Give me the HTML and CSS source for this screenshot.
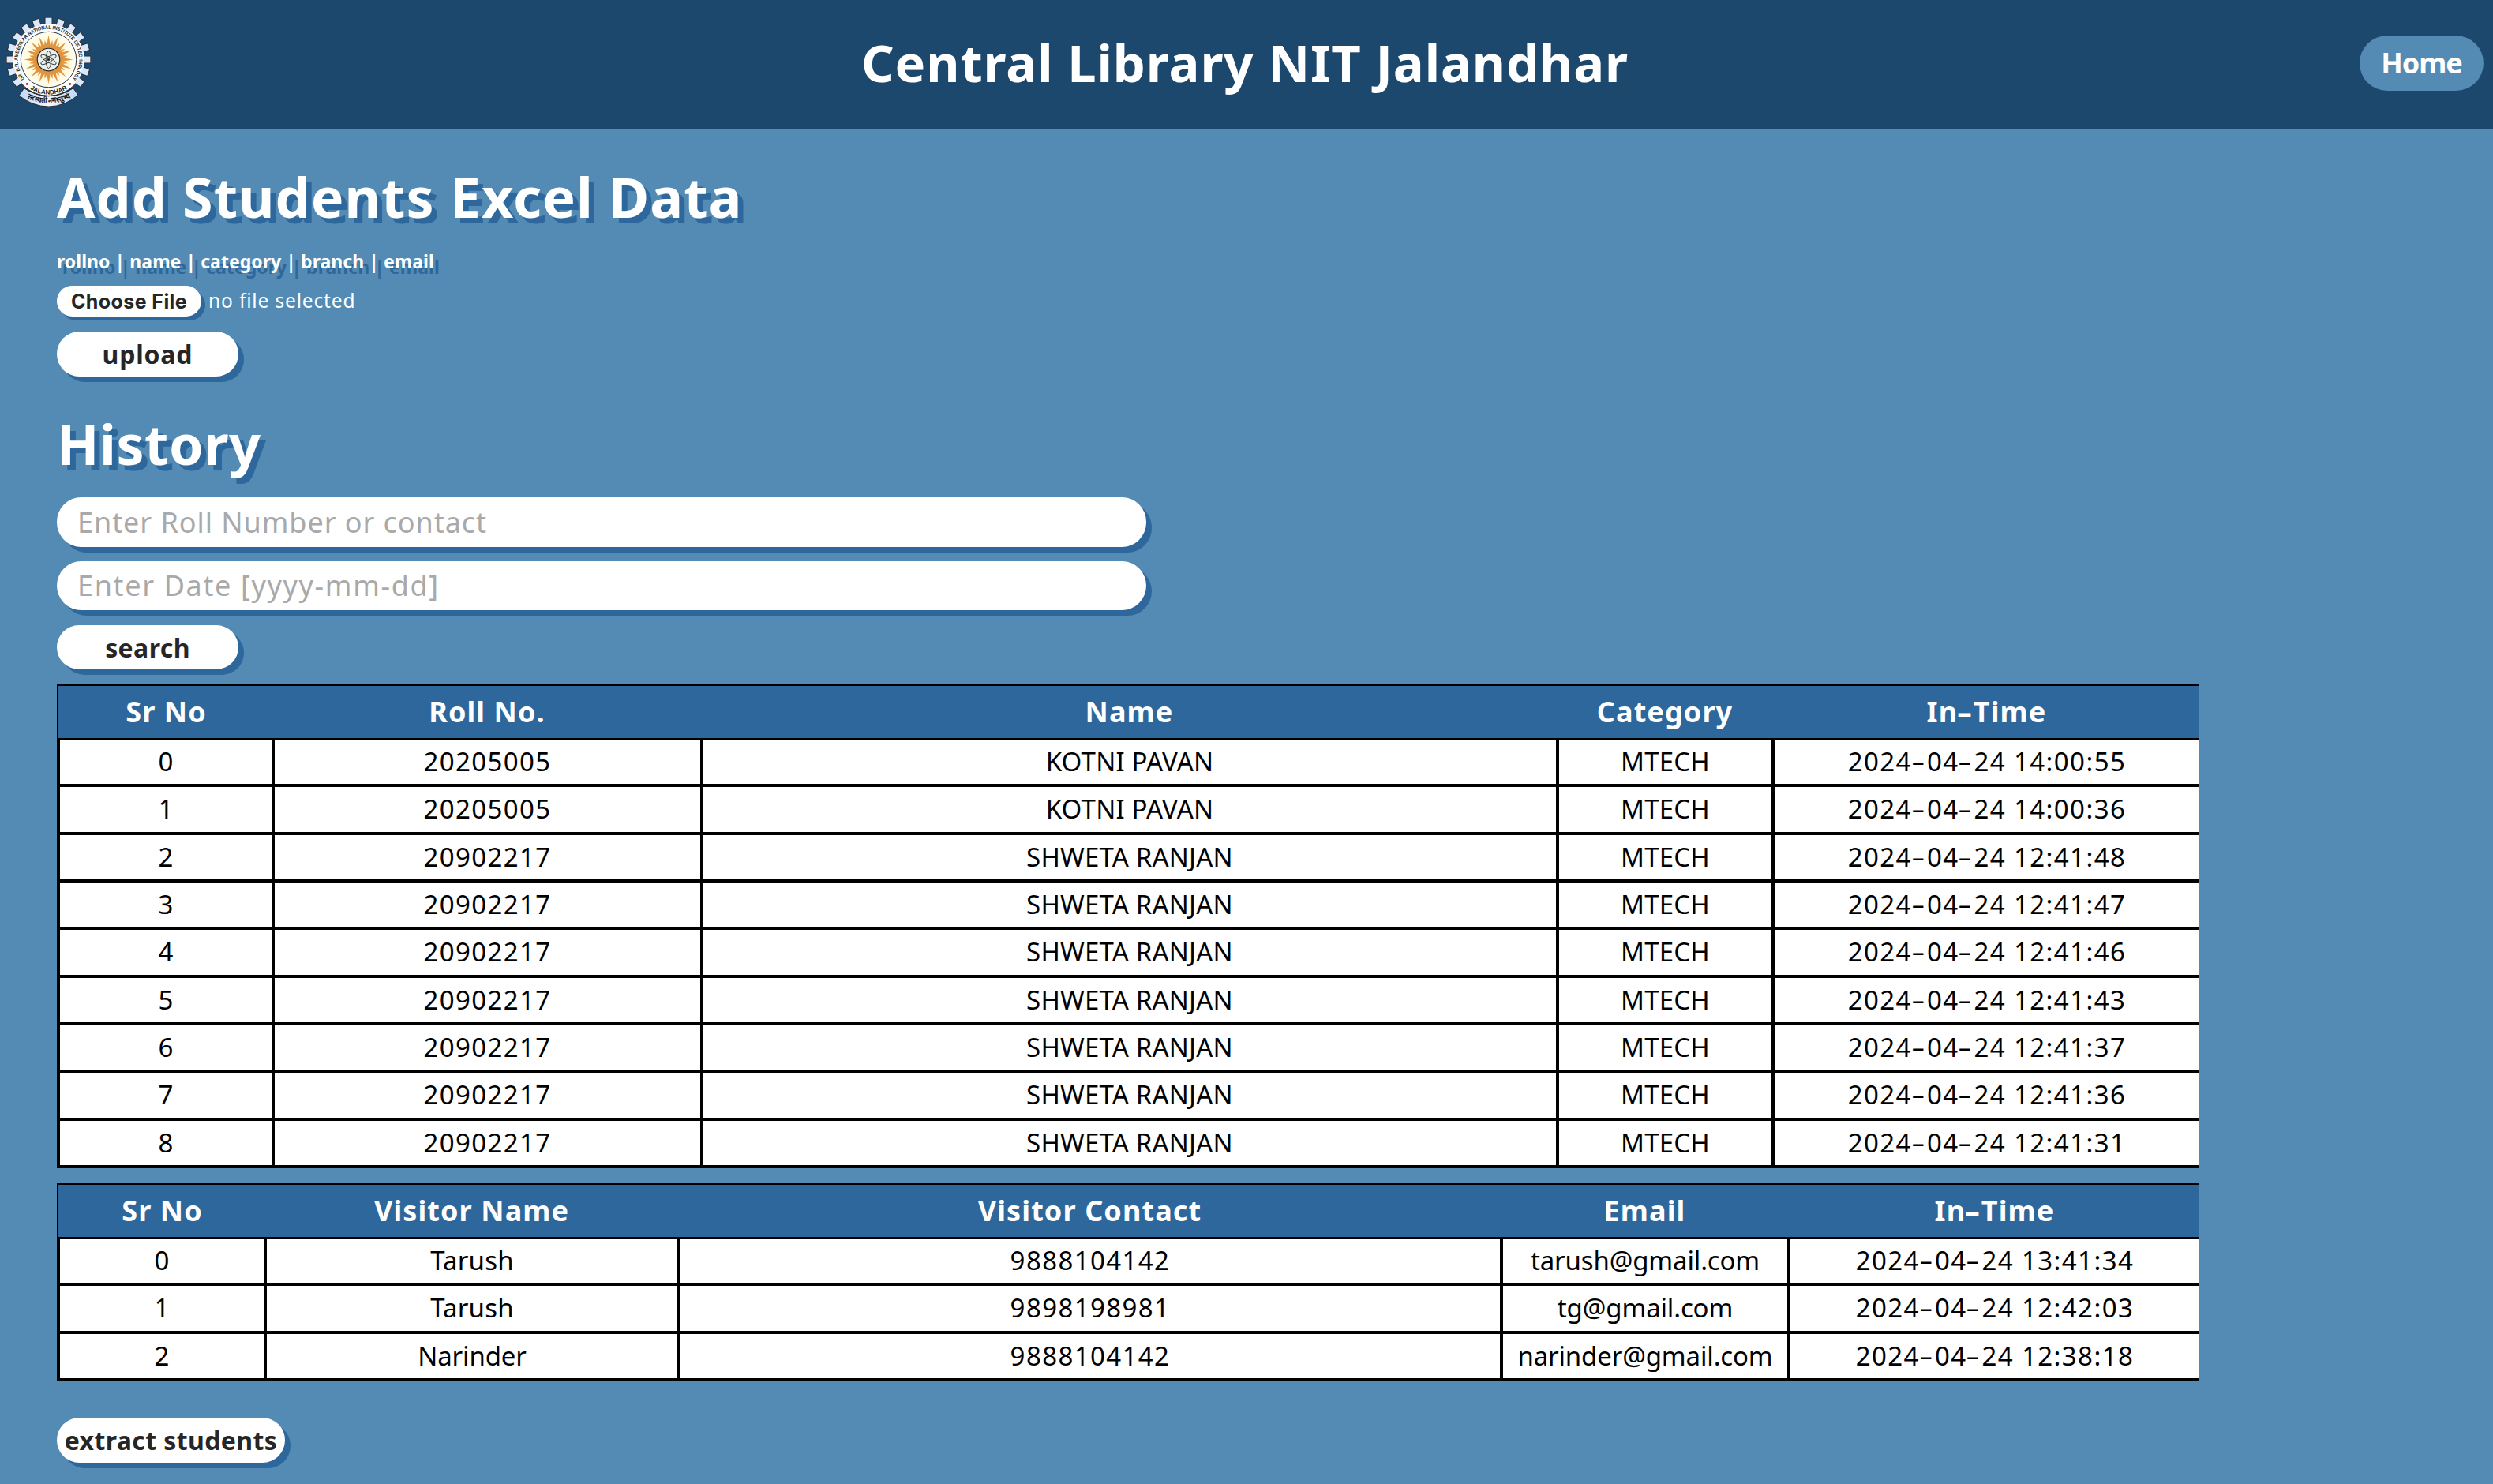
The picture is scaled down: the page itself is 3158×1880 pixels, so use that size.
FILE: index.html
```html
<!DOCTYPE html>
<html lang="en">
<head>
<meta charset="utf-8">
<title>Central Library NIT Jalandhar</title>
<link rel="stylesheet" href="styles.css">
</head>
<body>
<header class="topbar">
  <svg class="logo" viewBox="24 62 322 344" role="img" aria-label="NIT Jalandhar">
    <defs>
      <radialGradient id="disc"><stop offset="0.3" stop-color="#fff6c4"/><stop offset="1" stop-color="#fffdf0"/></radialGradient>
      <linearGradient id="band"><stop offset="0" stop-color="#bcd6f7"/><stop offset="0.5" stop-color="#f2f7ff"/><stop offset="1" stop-color="#bcd6f7"/></linearGradient>
      <path id="arcTop" d="M94 298 A116.500 116.500 0 1 1 276 298"/>
      <path id="arcLow" d="M67 286 A133 133 0 0 0 303 286"/>
      <path id="arcBand" d="M60 337 A172 172 0 0 0 310 337"/>
      <rect id="tooth" x="173" y="66" width="24" height="30"/>
      <g id="teeth">
        <use href="#tooth" transform="rotate(-126 185 225)"/><use href="#tooth" transform="rotate(-108 185 225)"/>
        <use href="#tooth" transform="rotate(-90 185 225)"/><use href="#tooth" transform="rotate(-72 185 225)"/>
        <use href="#tooth" transform="rotate(-54 185 225)"/><use href="#tooth" transform="rotate(-36 185 225)"/>
        <use href="#tooth" transform="rotate(-18 185 225)"/><use href="#tooth"/>
        <use href="#tooth" transform="rotate(18 185 225)"/><use href="#tooth" transform="rotate(36 185 225)"/>
        <use href="#tooth" transform="rotate(54 185 225)"/><use href="#tooth" transform="rotate(72 185 225)"/>
        <use href="#tooth" transform="rotate(90 185 225)"/><use href="#tooth" transform="rotate(108 185 225)"/>
        <use href="#tooth" transform="rotate(126 185 225)"/>
      </g>
      <g id="rays">
        <path d="M176 182 L185 132 L194 182Z"/>
        <path d="M176 182 L185 150 L194 182Z" transform="rotate(11.250 185 225)"/>
      </g>
      <g id="quarter">
        <use href="#rays"/><use href="#rays" transform="rotate(22.500 185 225)"/>
        <use href="#rays" transform="rotate(45 185 225)"/><use href="#rays" transform="rotate(67.500 185 225)"/>
      </g>
    </defs>
    <use href="#teeth" fill="#dbe7fb" stroke="#2b2b2b" stroke-width="5"/>
    <circle cx="185" cy="225" r="138" fill="#fff" stroke="#2b2b2b" stroke-width="3"/>
    <use href="#teeth" fill="#dbe7fb"/>
    <circle cx="185" cy="225" r="134" fill="#fafcff"/>
    <path d="M92 334 Q185 394 279 334 L298 360 Q246 404 185 404 Q124 404 72 362Z" fill="url(#band)" stroke="#2b2b2b" stroke-width="3"/>
    <path d="M96 326 Q185 390 274 326 L274 300 L96 300Z" fill="#fafcff"/>
    <path d="M92 334 Q185 394 279 334" fill="none" stroke="#2b2b2b" stroke-width="3"/>
    <circle cx="185" cy="225" r="106" fill="url(#disc)" stroke="#26313d" stroke-width="3"/>
    <g fill="#df9440">
      <use href="#quarter"/><use href="#quarter" transform="rotate(90 185 225)"/>
      <use href="#quarter" transform="rotate(180 185 225)"/><use href="#quarter" transform="rotate(270 185 225)"/>
    </g>
    <circle cx="185" cy="225" r="43" fill="#e8f0ec" stroke="#222" stroke-width="3.500"/>
    <g fill="none" stroke="#222" stroke-width="2.500">
      <ellipse cx="185" cy="225" rx="10" ry="33"/>
      <ellipse cx="185" cy="225" rx="10" ry="33" transform="rotate(60 185 225)"/>
      <ellipse cx="185" cy="225" rx="10" ry="33" transform="rotate(120 185 225)"/>
      <circle cx="185" cy="225" r="4" fill="#222"/>
    </g>
    <circle cx="103" cy="318" r="4.500" fill="#c0202c"/><circle cx="267" cy="318" r="4.500" fill="#c0202c"/>
    <g class="seal-text">
      <text font-size="20"><textPath href="#arcTop" textLength="524" lengthAdjust="spacingAndGlyphs">DR. B.R. AMBEDKAR NATIONAL INSTITUTE OF TECHNOLOGY</textPath></text>
      <text font-size="24" text-anchor="middle"><textPath href="#arcLow" startOffset="50%">JALANDHAR</textPath></text>
      <text font-size="28" text-anchor="middle"><textPath href="#arcBand" startOffset="50%">सरस्वती नमस्तुभ्यं</textPath></text>
    </g>
  </svg>
  <div class="site-title">Central Library NIT Jalandhar</div>
  <a class="home">Home</a>
</header>

<main class="page">
  <h1 class="heading">Add Students Excel Data</h1>
  <h6 class="columns-hint">rollno | name | category | branch | email</h6>
  <div class="file-row">
    <button class="choose">Choose File</button>
    <span class="file-name">no file selected</span>
  </div>
  <button class="btn upload">upload</button>

  <h1 class="heading history">History</h1>
  <input class="field" type="text" placeholder="Enter Roll Number or contact">
  <input class="field date-field" type="text" placeholder="Enter Date [yyyy-mm-dd]">
  <button class="btn search">search</button>

  <table class="log students">
    <thead>
      <tr><th>Sr No</th><th>Roll No.</th><th>Name</th><th>Category</th><th class="time">In<i>-</i>Time</th></tr>
    </thead>
    <tbody>
      <tr><td>0</td><td class="num">20205005</td><td>KOTNI PAVAN</td><td>MTECH</td><td class="num">2024<i>-</i>04<i>-</i>24 14:00:55</td></tr>
      <tr><td>1</td><td class="num">20205005</td><td>KOTNI PAVAN</td><td>MTECH</td><td class="num">2024<i>-</i>04<i>-</i>24 14:00:36</td></tr>
      <tr><td>2</td><td class="num">20902217</td><td>SHWETA RANJAN</td><td>MTECH</td><td class="num">2024<i>-</i>04<i>-</i>24 12:41:48</td></tr>
      <tr><td>3</td><td class="num">20902217</td><td>SHWETA RANJAN</td><td>MTECH</td><td class="num">2024<i>-</i>04<i>-</i>24 12:41:47</td></tr>
      <tr><td>4</td><td class="num">20902217</td><td>SHWETA RANJAN</td><td>MTECH</td><td class="num">2024<i>-</i>04<i>-</i>24 12:41:46</td></tr>
      <tr><td>5</td><td class="num">20902217</td><td>SHWETA RANJAN</td><td>MTECH</td><td class="num">2024<i>-</i>04<i>-</i>24 12:41:43</td></tr>
      <tr><td>6</td><td class="num">20902217</td><td>SHWETA RANJAN</td><td>MTECH</td><td class="num">2024<i>-</i>04<i>-</i>24 12:41:37</td></tr>
      <tr><td>7</td><td class="num">20902217</td><td>SHWETA RANJAN</td><td>MTECH</td><td class="num">2024<i>-</i>04<i>-</i>24 12:41:36</td></tr>
      <tr><td>8</td><td class="num">20902217</td><td>SHWETA RANJAN</td><td>MTECH</td><td class="num">2024<i>-</i>04<i>-</i>24 12:41:31</td></tr>
    </tbody>
  </table>

  <table class="log visitors">
    <thead>
      <tr><th>Sr No</th><th>Visitor Name</th><th>Visitor Contact</th><th>Email</th><th class="time">In<i>-</i>Time</th></tr>
    </thead>
    <tbody>
      <tr><td>0</td><td>Tarush</td><td class="num">9888104142</td><td class="mail">tarush@gmail.com</td><td class="num">2024<i>-</i>04<i>-</i>24 13:41:34</td></tr>
      <tr><td>1</td><td>Tarush</td><td class="num">9898198981</td><td class="mail">tg@gmail.com</td><td class="num">2024<i>-</i>04<i>-</i>24 12:42:03</td></tr>
      <tr><td>2</td><td class="mail">Narinder</td><td class="num">9888104142</td><td class="mail">narinder@gmail.com</td><td class="num">2024<i>-</i>04<i>-</i>24 12:38:18</td></tr>
    </tbody>
  </table>

  <button class="btn extract">extract students</button>
</main>
</body>
</html>
```
FILE: styles.css
```css
* { box-sizing: border-box; }

body {
  margin: 0;
  min-height: 100vh;
  background: #538bb4;
  font-family: "Noto Sans", "Open Sans", sans-serif;
  color: #fff;
}

.topbar {
  display: grid;
  grid-template-columns: 1fr auto 1fr;
  align-items: center;
  height: 164px;
  padding: 0 12px 4px 8px;
  background: #1d486d;
}
.logo { width: 107px; height: 115px; margin-top: -4px; }
.site-title {
  margin-top: -2px;
  font-size: 65px;
  font-weight: 700;
  line-height: 90px;
  letter-spacing: 0.92px;
}
.home {
  justify-self: end;
  width: 157px;
  height: 70px;
  border-radius: 35px;
  background: #538bb4;
  font-size: 36px;
  font-weight: 700;
  line-height: 69px;
  letter-spacing: -1px;
  text-align: center;
}

.page {
  display: flex;
  flex-direction: column;
  align-items: flex-start;
  padding: 37px 0 0 72px;
}
.heading {
  margin: 0;
  font-size: 70px;
  font-weight: 700;
  line-height: 96px;
  letter-spacing: 1px;
  text-shadow: 7px 7px #2d679b;
}
.history { margin-top: 37px; letter-spacing: 0.5px; }
.columns-hint {
  margin: 19px 0 0;
  font-size: 23px;
  font-weight: 700;
  line-height: 30px;
  letter-spacing: 0.05px;
  text-shadow: 7px 7px #2d679b;
}

.file-row { display: flex; align-items: center; gap: 9px; margin-top: 16px; }
.choose {
  width: 183px;
  height: 39px;
  padding: 0;
  border: 0;
  border-radius: 20px;
  background: #fff;
  box-shadow: 5px 5px #2d679b;
  color: #262626;
  font: 700 25px Inter, sans-serif;
  letter-spacing: 0.4px;
}
.file-name { font-size: 24.5px; line-height: 37px; margin-top: -2px; letter-spacing: 0.85px; }

.btn {
  width: 230px;
  height: 57px;
  padding: 0;
  border: 0;
  border-radius: 29px;
  background: #fff;
  box-shadow: 7px 7px #2d679b;
  color: #262626;
  font: 700 32px "Noto Sans", sans-serif;
  letter-spacing: 0.4px;
}
.upload { margin-top: 19px; letter-spacing: 0.8px; }
.search { height: 56px; margin-top: 19px; }
.extract { width: 289px; margin-top: 46px; }

.field {
  width: 1380px;
  height: 63px;
  margin-top: 20px;
  padding: 0 26px 1px;
  border: 0;
  border-radius: 31px;
  background: #fff;
  box-shadow: 7px 7px #2d679b;
  font: 36px "Noto Sans", sans-serif;
  letter-spacing: 0.94px;
}
.date-field { height: 62px; margin-top: 18px; letter-spacing: 1.65px; }
.field::placeholder { color: #a9a9a9; }

.log { display: block; width: 2714px; border-spacing: 0; text-align: center; }
.log thead, .log tbody { display: block; }
.log tr { display: grid; }
.students { margin-top: 19px; }
.students tr { grid-template-columns: 272px 543px 1084px 273px 542px; }
.students thead tr { grid-template-columns: 270px 543px 1084px 273px 542px; }
.visitors { margin-top: 19px; }
.visitors tr { grid-template-columns: 262px 524px 1042px 364px 522px; }
.visitors thead tr { grid-template-columns: 260px 524px 1042px 364px 522px; }

.log thead {
  border: solid #000;
  border-width: 2px 0 2px 2px;
  background: #2d679b;
}
.log th {
  height: 66px;
  padding: 0 0 0 3px;
  font-size: 36px;
  line-height: 66px;
  letter-spacing: 1.1px;
}
.log td {
  height: 60.35px;
  padding: 0;
  border: solid #000;
  border-width: 0 0 4px 4px;
  background: #fff;
  color: #000;
  font-size: 33px;
  line-height: 56px;
  letter-spacing: 0.2px;
}
.log .num { letter-spacing: 1.4px; }
.log .mail { letter-spacing: -0.15px; }
.log i {
  display: inline-block;
  margin: 0 4px 0 3px;
  font-style: normal;
  transform: scaleX(1.65);
}

.seal-text { font-family: "Liberation Sans", sans-serif; font-weight: 700; fill: #1c1c1c; }
```
